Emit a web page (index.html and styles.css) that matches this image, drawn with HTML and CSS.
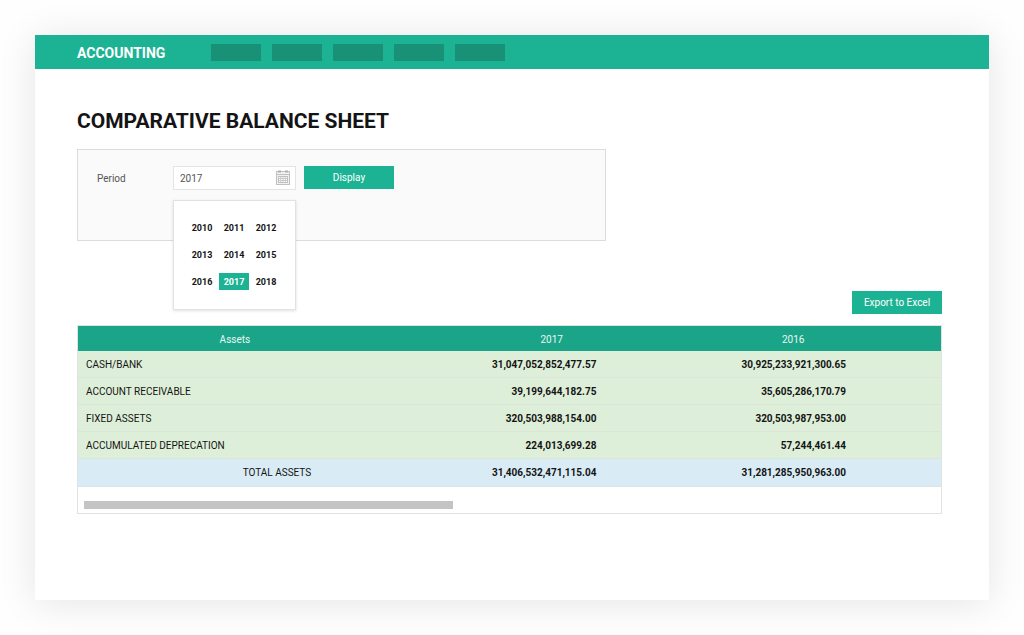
FILE: index.html
```html
<!DOCTYPE html>
<html lang="en">
<head>
<meta charset="utf-8">
<title>Comparative Balance Sheet</title>
<meta name="viewport" content="width=device-width, initial-scale=1">
<link rel="stylesheet" href="styles.css">
</head>
<body>
<div class="card">
  <header class="topbar">
    <span class="brand">ACCOUNTING</span>
    <nav class="nav">
      <a class="nav-item" href="#"></a>
      <a class="nav-item" href="#"></a>
      <a class="nav-item" href="#"></a>
      <a class="nav-item" href="#"></a>
      <a class="nav-item" href="#"></a>
    </nav>
  </header>
  <main class="content">
    <h1 class="title">COMPARATIVE BALANCE SHEET</h1>
    <form class="filter">
      <label class="filter-label" for="period">Period</label>
      <div class="picker">
        <input class="picker-input" id="period" type="text" value="2017">
        <svg class="picker-icon" viewBox="0 0 14 15" fill="none" stroke="#c0c0c0">
          <rect x="0.5" y="1.5" width="13" height="13" fill="#f1f1f1"/>
          <path d="M0.5 4.5H13.5"/>
          <path d="M2 1.5H5M9 1.5H12" stroke="#b0b0b0" stroke-width="2"/>
          <rect x="2.5" y="6.5" width="9" height="6" fill="#fff"/>
          <path d="M4.75 6.5V12.5M7 6.5V12.5M9.25 6.5V12.5M2.5 8.5H11.5M2.5 10.5H11.5" stroke-width="0.8"/>
        </svg>
        <div class="years">
          <button class="year" type="button">2010</button>
          <button class="year" type="button">2011</button>
          <button class="year" type="button">2012</button>
          <button class="year" type="button">2013</button>
          <button class="year" type="button">2014</button>
          <button class="year" type="button">2015</button>
          <button class="year" type="button">2016</button>
          <button class="year year-selected" type="button">2017</button>
          <button class="year" type="button">2018</button>
        </div>
      </div>
      <button class="button" type="button">Display</button>
    </form>
    <div class="actions">
      <button class="button" type="button">Export to Excel</button>
    </div>
    <div class="sheet">
      <table class="table">
        <colgroup><col class="col-name"><col class="col-first"><col class="col-second"></colgroup>
        <thead>
          <tr><th class="head-name" scope="col">Assets</th><th scope="col">2017</th><th class="head-last" scope="col">2016</th></tr>
        </thead>
        <tbody>
          <tr><th scope="row">CASH/BANK</th><td>31,047,052,852,477.57</td><td class="last">30,925,233,921,300.65</td></tr>
          <tr><th scope="row">ACCOUNT RECEIVABLE</th><td>39,199,644,182.75</td><td class="last">35,605,286,170.79</td></tr>
          <tr><th scope="row">FIXED ASSETS</th><td>320,503,988,154.00</td><td class="last">320,503,987,953.00</td></tr>
          <tr><th scope="row">ACCUMULATED DEPRECATION</th><td>224,013,699.28</td><td class="last">57,244,461.44</td></tr>
        </tbody>
        <tfoot>
          <tr><th scope="row">TOTAL ASSETS</th><td>31,406,532,471,115.04</td><td class="last">31,281,285,950,963.00</td></tr>
        </tfoot>
      </table>
      <div class="scroll"><div class="scroll-thumb"></div></div>
    </div>
  </main>
</div>
</body>
</html>
```
FILE: styles.css
```css
* {
  box-sizing: border-box;
}

body {
  margin: 0;
  padding: 35px;
  background: #fefefe;
  color: #141414;
  font: 10px/16px Roboto, "Liberation Sans", sans-serif;
}

button,
input {
  font: inherit;
}

.card {
  min-height: calc(100vh - 70px);
  background: #fff;
  box-shadow: 0 3px 36px rgba(0, 0, 0, 0.1);
}

.topbar {
  display: flex;
  align-items: center;
  height: 34px;
  padding: 0 42px;
  background: #1cb394;
}

.brand {
  width: 134px;
  padding-top: 2px;
  color: #fff;
  font-size: 14px;
  font-weight: 700;
}

.nav {
  display: flex;
  gap: 11px;
}

.nav-item {
  width: 50px;
  height: 17px;
  background: #189176;
}

.content {
  padding: 38px 47px 40px 42px;
}

.title {
  margin: 0 0 14px;
  font-size: 21px;
  line-height: 28px;
  font-weight: 700;
}

.filter {
  display: flex;
  align-items: flex-start;
  max-width: 529px;
  min-height: 92px;
  padding: 16px 19px;
  border: 1px solid #dcdcdc;
  background: #fafafa;
}

.filter-label {
  width: 76px;
  padding-top: 1px;
  line-height: 24px;
  color: #555;
}

.picker {
  position: relative;
  width: 123px;
  margin-right: 8px;
}

.picker-input {
  display: block;
  width: 100%;
  height: 24px;
  padding: 0 24px 0 6px;
  border: 1px solid #e4e4e4;
  background: #fff;
  color: #555;
  outline: none;
}

.picker-icon {
  position: absolute;
  top: 4px;
  right: 6px;
  width: 14px;
  height: 15px;
}

.years {
  position: absolute;
  top: 34px;
  left: 0;
  display: grid;
  grid-template-columns: repeat(3, 30px);
  gap: 10px 2px;
  width: 100%;
  padding: 18px 13px 19px;
  border: 1px solid #e2e2e2;
  background: #fff;
  box-shadow: 0 1px 3px rgba(0, 0, 0, 0.12);
}

.year {
  height: 17px;
  padding: 0;
  border: 0;
  background: none;
  color: #141414;
  font-size: 9px;
  font-weight: 700;
}

.year-selected {
  background: #1cb394;
  color: #fff;
}

.button {
  width: 90px;
  height: 23px;
  padding: 1px 0 0;
  border: 0;
  background: #1cb394;
  color: #fff;
}

.actions {
  display: flex;
  justify-content: flex-end;
  margin: 50px 0 11px;
}

.sheet {
  border: 1px solid #e2e2e2;
}

.table {
  width: 100%;
  border-collapse: separate;
  border-spacing: 0;
  table-layout: fixed;
}

.col-name {
  width: 41%;
}

.col-first {
  width: 28%;
}

.col-second {
  width: 31%;
}

.table th,
.table td {
  height: 27px;
  padding: 1px 77px 0 8px;
  border-bottom: 1px solid #dde4da;
  background: #deefd9;
  font-weight: 400;
  text-align: left;
}

.table td {
  font-weight: 700;
  text-align: right;
}

.table td.last {
  padding-right: 95px;
}

.table thead th {
  height: 25px;
  padding: 2px 2px 0 0;
  border: 0;
  background: #1aa588;
  color: #e9f8f4;
  text-align: center;
}

.table thead .head-name {
  padding-right: 40px;
}

.table thead .head-last {
  padding-right: 28px;
}

.table tfoot th,
.table tfoot td {
  height: 28px;
  padding-top: 0;
  border-color: #dce2e6;
  background: #d9ecf6;
}

.table tfoot th {
  padding: 0 0 0 44px;
  text-align: center;
}

.scroll {
  padding: 14px 6px 4px;
}

.scroll-thumb {
  width: 369px;
  max-width: 100%;
  height: 8px;
  background: #c4c4c4;
}
```
